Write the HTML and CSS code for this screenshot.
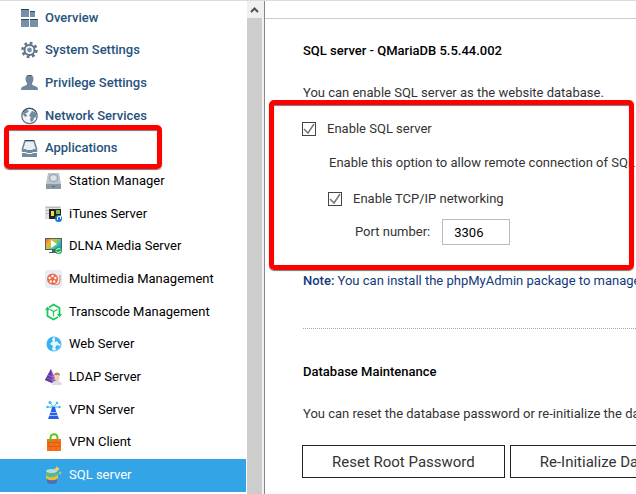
FILE: index.html
```html
<!DOCTYPE html>
<html lang="en">
<head>
<meta charset="utf-8">
<title>SQL server</title>
<link rel="stylesheet" href="styles.css">
</head>
<body>
<div class="app">
  <nav class="sidebar" aria-label="Settings">
    <ul class="menu">
      <li><a href="#" class="item top"><svg class="icon" viewBox="0 0 17 18"><path fill="#7890a6" d="M0 0h8v8H0zM9 2h5v6H9zM0 10h8v8H0zM9 10h8v8H9z"/><path fill="#2c4558" d="M0 0h8v1H0zM9 2h5v1H9zM0 10h8v1H0zM9 10h8v1H9z"/></svg>Overview</a></li>
      <li><a href="#" class="item top"><svg class="icon" viewBox="0 0 17 18"><g fill="none" stroke="#5c7388"><circle cx="8.500" cy="9" r="7" stroke-width="2.500" stroke-dasharray="2.750 2.750"/><circle cx="8.500" cy="9" r="5" stroke-width="2"/></g><circle cx="8.500" cy="9" r="2.400" fill="#7890a6"/></svg>System Settings</a></li>
      <li><a href="#" class="item top"><svg class="icon" viewBox="0 0 17 18"><path fill="#6f889e" d="M4.500 4.500C4.500 0 12.500 0 12.500 4.500c0 3-1 3.500-1.500 5 0 1.500 1 2 4 3 1.500.5 2 1.500 2 3.500H0c0-2 .5-3 2-3.500 3-1 4-1.500 4-3-.5-1.500-1.500-2-1.500-5z"/><path fill="#2f4659" d="M5 2.500C6 .500 11 .500 12 2.500 10 1.500 7 1.500 5 2.500z"/></svg>Privilege Settings</a></li>
      <li><a href="#" class="item top"><svg class="icon" viewBox="0 0 17 18"><circle cx="8.500" cy="9" r="7.700" fill="#f2f5f7" stroke="#5d7488" stroke-width="1.300"/><path fill="#708aa0" d="M2 7c0-2 2-4 4-4l2 1-2 2-2 0 2 2-1 2-2-1zM9 7l2-3 3 1c1 1 2 3 1 5l-2 1-1 3-2 1-1-3 1-2-2-1z"/><path fill="none" stroke="#2f4659" d="M2 5C5 0 12 0 15 5"/></svg>Network Services</a></li>
      <li class="current"><a href="#" class="item top"><svg class="icon" viewBox="0 0 17 18"><path fill="#e9eef2" stroke="#6b8296" stroke-width="1.500" d="M4 1.700h9l2.500 8v2h-14v-2z"/><path fill="#728a9f" d="M1 10h4l1 2h5l1-2h4v8H1z"/><path fill="#2f4659" d="M4 1h9v1H4z"/><path fill="#fff" d="M1 13h4l1 1h5l1-1h4v1h-4l-1 1H6l-1-1H1z"/></svg>Applications</a></li>
      <li><a href="#" class="item sub"><svg class="icon" viewBox="0 0 17 18"><path fill="#bac4cb" d="M3 1h11l2 11H1z"/><ellipse cx="8.500" cy="6" rx="4" ry="3.500" fill="#dce2e5" stroke="#8b9ba6"/><path fill="#8999a4" d="M1 12h15v5H1z"/><path fill="#53636e" d="M7 14h3v1H7z"/></svg>Station Manager</a></li>
      <li><a href="#" class="item sub"><svg class="icon" viewBox="0 0 17 18"><path fill="#dde1e5" d="M0 1h16v13H0z"/><path fill="#b3bac1" d="M1 2h14v1H1zM1 5h3v1H1zM1 8h3v1H1z"/><path fill="#202224" d="M4 4h12v10H4z"/><path fill="#f1d84a" d="M6 6h3v5H6z"/><path fill="#89b53d" d="M11 5h4v4h-4z"/><circle cx="13.500" cy="13.500" r="3.500" fill="#1778d4"/><path fill="none" stroke="#fff" d="M12.500 15v-3l3-1v3"/></svg>iTunes Server</a></li>
      <li><a href="#" class="item sub"><svg class="icon" viewBox="0 0 17 18"><defs><linearGradient id="screen" x2="1" y2=".6"><stop stop-color="#ef5b4a"/><stop offset=".3" stop-color="#f7ad36"/><stop offset=".55" stop-color="#9bd14a"/><stop offset="1" stop-color="#16a4df"/></linearGradient></defs><path fill="#535f68" d="M0 1h17v12H0zM7 13h3v2H7zM4 15h9v1H4z"/><path fill="url(#screen)" d="M1 2h15v10H1z"/><path fill="#fff" d="m6 3 6 4-6 4z"/><circle cx="13.500" cy="13.500" r="3.500" fill="#18ae54"/><path fill="none" stroke="#fff" d="M11.500 13c1-2 3-2 4-.5M15.500 14c-1 2-3 2-4 .5"/></svg>DLNA Media Server</a></li>
      <li><a href="#" class="item sub"><svg class="icon" viewBox="0 0 17 18"><rect width="17" height="18" rx="3" fill="#e8eef8"/><circle cx="7.500" cy="9" r="5.500" fill="#ed6844"/><g fill="#fff"><circle cx="7.500" cy="6" r="1.200"/><circle cx="4.700" cy="8" r="1.200"/><circle cx="10.300" cy="8" r="1.200"/><circle cx="5.800" cy="11.500" r="1.200"/><circle cx="9.200" cy="11.500" r="1.200"/></g><path fill="none" stroke="#ed8a6c" stroke-width="1.200" d="M7 14.500h5c2 0 3-2 3-5V5"/></svg>Multimedia Management</a></li>
      <li><a href="#" class="item sub"><svg class="icon" viewBox="0 0 17 18"><g fill="none" stroke="#18c95c"><path stroke-width="1.800" d="M4 4.500 8.500 1.500l6 3.500v8M13 14l-4.500 2.500L2.500 13V5"/><path stroke-width="1.200" d="m5 6.500 3.500 2 4-2M8.500 8.500v5"/></g><path fill="#18c95c" d="M12 11h5l-2.500 3.500zM0 7h5L2.500 3.500z"/></svg>Transcode Management</a></li>
      <li><a href="#" class="item sub"><svg class="icon" viewBox="0 0 17 18"><circle cx="9" cy="9" r="7" fill="#e6f6ff" stroke="#55bff2" stroke-width="1.200"/><path fill="#38b0ef" d="M2 9c0-4 3-7 6-7L7 5l1 1-3 3 3 2-1 3 1 2c-4 0-6-3-6-7zM10 3c3 0 5 2 6 5l-2 1-2-3-2 1zM12 10l3 1-3 4-2-2z"/></svg>Web Server</a></li>
      <li><a href="#" class="item sub"><svg class="icon" viewBox="0 0 17 18"><path fill="#8b5bc3" d="m6 1 6 13-5 1-7-3z"/><path fill="#6538a2" d="m6 1 1 14-7-3z"/><path fill="none" stroke="#ae89d7" stroke-width=".6" d="m3 7 4 2 2-1M2 10l5 2 4-1"/><path fill="#d8dee2" d="M7 17c0-4 2-4 5-4s5 1 5 4z"/><ellipse cx="12" cy="9.500" rx="2.600" ry="3.500" fill="#efd0ae"/><path fill="#b08a68" d="M9 8c0-5 7-4 6 0l-1-1h-4z"/></svg>LDAP Server</a></li>
      <li><a href="#" class="item sub"><svg class="icon" viewBox="0 0 17 18"><path fill="none" stroke="#39b9ed" d="M8.500 6 5 2M8.500 6 12 2M8.500 6H2M8.500 6H15"/><g fill="#39b9ed"><circle cx="5" cy="1.500" r="1.500"/><circle cx="12" cy="2" r="1.200"/><circle cx="2.500" cy="6" r="1.200"/><circle cx="14.500" cy="6" r="1.200"/></g><path fill="#285fe4" d="M7 6h3l1 4 3 8H3l3-8z"/><path stroke="#a8c2ff" d="M5 11.500h7M4 14.500h9"/></svg>VPN Server</a></li>
      <li><a href="#" class="item sub"><svg class="icon" viewBox="0 0 17 18"><path fill="#f8701a" d="M2 6h14v12H2z"/><path stroke="#d3540c" stroke-width=".6" d="M2 9.500h14M2 13.500h14M6 6v3.500M11 6v3.500M4 9.500v4M9 9.500v4M14 9.500v4M6 13.500V18M11 13.500V18"/><path fill="none" stroke="#56c91d" stroke-width="2" d="M5.500 9V5c0-5 7-5 7 0v1"/></svg>VPN Client</a></li>
      <li><a href="#" class="item sub selected" aria-current="page"><svg class="icon" viewBox="0 0 17 18"><path fill="#4c72b5" d="M2 12c1 3 9 3 10 0v4c-1 3-9 3-10 0z"/><path fill="#edbd36" d="M1 8c2 3 10 3 12 0v4c-2 3-10 3-12 0z"/><path fill="#55b899" d="M1 5h11v4c-2 3-9 3-11 0z"/><ellipse cx="6.500" cy="5" rx="5.500" ry="2" fill="#b5e0cf"/><path fill="#ffd34c" d="m12 0 1 2 2 1-2 1-1 2-1-2-2-1 2-1zM15 5l.5 1.500L17 7l-1.500.5L15 9l-.5-1.500L13 7l1.500-.5z"/></svg>SQL server</a></li>
    </ul>
  </nav>
  <div class="scrollbar" aria-hidden="true"><div class="scroll-up"><svg viewBox="0 0 9 6"><path d="m1 5 3.500-3.500L8 5" fill="none" stroke="#505050" stroke-width="2"/></svg></div></div>
  <main class="content">
    <header class="tabs"></header>
    <h2>SQL server - QMariaDB 5.5.44.002</h2>
    <p class="intro">You can enable SQL server as the website database.</p>
    <section class="options">
      <label class="check"><input type="checkbox" checked>Enable SQL server</label>
      <p class="hint">Enable this option to allow remote connection of SQL</p>
      <label class="check nested"><input type="checkbox" checked>Enable TCP/IP networking</label>
      <div class="port"><label for="port">Port number:</label><input id="port" type="text" value="3306"></div>
    </section>
    <p class="note"><b>Note:</b> You can install the phpMyAdmin package to manage</p>
    <hr>
    <h2>Database Maintenance</h2>
    <p class="intro">You can reset the database password or re-initialize the database</p>
    <div class="actions"><button type="button">Reset Root Password</button><button type="button">Re-Initialize Database</button></div>
  </main>
</div>
</body>
</html>
```
FILE: styles.css
```css
*, *::after { box-sizing: border-box; }

body {
  margin: 0;
  overflow: hidden;
  background: #fff;
  color: #333;
  font: 13px/20px Roboto, sans-serif;
}

.app {
  display: flex;
  height: 100vh;
  border-top: 1px solid #dcdcdc;
}

.sidebar {
  flex: 0 0 247px;
  padding: 1px 1px 0 0;
  overflow: hidden;
}

.menu { margin: 0; padding: 0; list-style: none; }
.menu li { display: flex; height: 33px; }
.menu li:nth-child(3n + 1) { height: 32px; }
.item {
  display: flex;
  flex: 1;
  align-items: center;
  gap: 7px;
  padding-bottom: 1px;
  color: #000;
  text-decoration: none;
}
.top { padding-left: 21px; color: #27527d; font-weight: 500; }
.sub { padding-left: 45px; }
.selected { background: #33a5e7; color: #fff; }
.icon { width: 17px; height: 18px; }

.current { position: relative; }
.current::after,
.options::after {
  content: "";
  position: absolute;
  border: 5px solid #f00;
  border-radius: 5px;
  box-shadow: 0 1px 1px #777, inset 0 1px 1px #777;
  pointer-events: none;
}
.current::after { top: -7px; bottom: -4px; left: 4px; width: 158px; }

.scrollbar {
  flex: 0 0 18px;
  border-right: 1px solid #888;
  background: linear-gradient(90deg, #cdcdcd 15px, #f0f0f0 15px);
}
.scroll-up {
  display: flex;
  justify-content: center;
  align-items: center;
  height: 17px;
  padding-right: 2px;
  background: #f0f0f0;
}
.scroll-up svg { width: 9px; height: 6px; }

.content {
  flex: 1;
  min-width: 0;
  overflow: hidden;
  white-space: nowrap;
}
.tabs { height: 18px; border-bottom: 1px solid #ccc; }
h2 {
  margin: 22px 0 0 38px;
  color: #000;
  font-size: 13px;
  font-weight: 500;
  line-height: 20px;
}
p { margin: 0; }
.intro { margin: 22px 0 0 38px; }

.options {
  position: relative;
  display: flex;
  flex-direction: column;
  align-items: flex-start;
  padding: 16px 0 26px 37px;
}
.options::after { top: -3px; right: 2px; bottom: 1px; left: 4px; }
.check { display: flex; align-items: center; gap: 11px; }
.check input {
  appearance: none;
  width: 14px;
  height: 14px;
  margin: 0;
  border: 1px solid #444;
  background: #fff;
}
.check input:checked {
  background-image: url("data:image/svg+xml,%3Csvg xmlns='http://www.w3.org/2000/svg' viewBox='0 0 12 12'%3E%3Cpath d='m1 6 4 4 6-9' fill='none' stroke='%23777' stroke-width='1.500'/%3E%3C/svg%3E");
}
.hint { margin: 14px 0 0 27px; }
.nested { margin: 16px 0 0 26px; }
.port { display: flex; align-items: center; gap: 12px; margin: 10px 0 0 53px; }
.port input {
  width: 68px;
  height: 26px;
  padding: 0 11px;
  border: 1px solid #bbb;
  background: #fff;
  color: #000;
  font: inherit;
}
.note { margin-left: 38px; color: #123a7c; }
.note b { font-weight: 500; }
hr { margin: 37px 0 0 38px; border: 0; border-top: 1px dotted #aaa; }
hr + h2 { margin-top: 33px; }

.actions { display: flex; gap: 5px; margin: 21px 0 0 37px; }
button {
  height: 33px;
  padding: 0 29px;
  border: 1px solid #222;
  background: #fff;
  color: #333;
  font: 15px/20px Roboto, sans-serif;
}
```
